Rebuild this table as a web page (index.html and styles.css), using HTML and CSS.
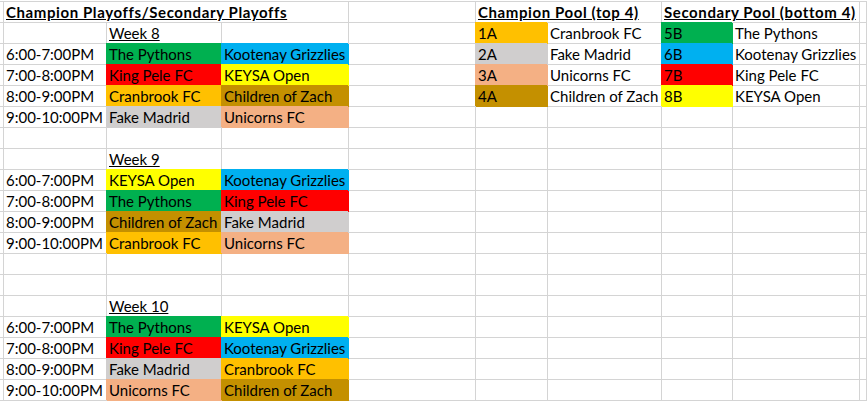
FILE: index.html
```html
<!DOCTYPE html>
<html>
<head>
<meta charset="utf-8">
<link rel="stylesheet" href="styles.css">
</head>
<body>
<div class="sheet">
  <!-- row 0 -->
  <div class="c top"></div><div class="c top s3 title">Champion Playoffs/Secondary Playoffs</div><div class="c top"></div><div class="c top s2 title">Champion Pool (top 4)</div><div class="c top s2 title">Secondary Pool (bottom 4)</div><div class="c top"></div>
  <!-- row 1 -->
  <div class="c"></div><div class="c"></div><div class="c u">Week 8</div><div class="c"></div><div class="c"></div><div class="c org">1A</div><div class="c">Cranbrook FC</div><div class="c grn">5B</div><div class="c">The Pythons</div><div class="c"></div>
  <!-- row 2 -->
  <div class="c"></div><div class="c">6:00-7:00PM</div><div class="c grn">The Pythons</div><div class="c blu">Kootenay Grizzlies</div><div class="c"></div><div class="c gry">2A</div><div class="c">Fake Madrid</div><div class="c blu">6B</div><div class="c">Kootenay Grizzlies</div><div class="c"></div>
  <!-- row 3 -->
  <div class="c"></div><div class="c">7:00-8:00PM</div><div class="c red">King Pele FC</div><div class="c yel">KEYSA Open</div><div class="c"></div><div class="c pch">3A</div><div class="c">Unicorns FC</div><div class="c red">7B</div><div class="c">King Pele FC</div><div class="c"></div>
  <!-- row 4 -->
  <div class="c"></div><div class="c">8:00-9:00PM</div><div class="c org">Cranbrook FC</div><div class="c brn">Children of Zach</div><div class="c"></div><div class="c brn">4A</div><div class="c">Children of Zach</div><div class="c yel">8B</div><div class="c">KEYSA Open</div><div class="c"></div>
  <!-- row 5 -->
  <div class="c"></div><div class="c">9:00-10:00PM</div><div class="c gry">Fake Madrid</div><div class="c pch">Unicorns FC</div><div class="c"></div><div class="c"></div><div class="c"></div><div class="c"></div><div class="c"></div><div class="c"></div>
  <!-- row 6 -->
  <div class="c"></div><div class="c"></div><div class="c"></div><div class="c"></div><div class="c"></div><div class="c"></div><div class="c"></div><div class="c"></div><div class="c"></div><div class="c"></div>
  <!-- row 7 -->
  <div class="c"></div><div class="c"></div><div class="c u">Week 9</div><div class="c"></div><div class="c"></div><div class="c"></div><div class="c"></div><div class="c"></div><div class="c"></div><div class="c"></div>
  <!-- row 8 -->
  <div class="c"></div><div class="c">6:00-7:00PM</div><div class="c yel">KEYSA Open</div><div class="c blu">Kootenay Grizzlies</div><div class="c"></div><div class="c"></div><div class="c"></div><div class="c"></div><div class="c"></div><div class="c"></div>
  <!-- row 9 -->
  <div class="c"></div><div class="c">7:00-8:00PM</div><div class="c grn">The Pythons</div><div class="c red">King Pele FC</div><div class="c"></div><div class="c"></div><div class="c"></div><div class="c"></div><div class="c"></div><div class="c"></div>
  <!-- row 10 -->
  <div class="c"></div><div class="c">8:00-9:00PM</div><div class="c brn">Children of Zach</div><div class="c gry">Fake Madrid</div><div class="c"></div><div class="c"></div><div class="c"></div><div class="c"></div><div class="c"></div><div class="c"></div>
  <!-- row 11 -->
  <div class="c"></div><div class="c">9:00-10:00PM</div><div class="c org">Cranbrook FC</div><div class="c pch">Unicorns FC</div><div class="c"></div><div class="c"></div><div class="c"></div><div class="c"></div><div class="c"></div><div class="c"></div>
  <!-- row 12 -->
  <div class="c"></div><div class="c"></div><div class="c"></div><div class="c"></div><div class="c"></div><div class="c"></div><div class="c"></div><div class="c"></div><div class="c"></div><div class="c"></div>
  <!-- row 13 -->
  <div class="c"></div><div class="c"></div><div class="c"></div><div class="c"></div><div class="c"></div><div class="c"></div><div class="c"></div><div class="c"></div><div class="c"></div><div class="c"></div>
  <!-- row 14 -->
  <div class="c"></div><div class="c"></div><div class="c u">Week 10</div><div class="c"></div><div class="c"></div><div class="c"></div><div class="c"></div><div class="c"></div><div class="c"></div><div class="c"></div>
  <!-- row 15 -->
  <div class="c"></div><div class="c">6:00-7:00PM</div><div class="c grn">The Pythons</div><div class="c yel">KEYSA Open</div><div class="c"></div><div class="c"></div><div class="c"></div><div class="c"></div><div class="c"></div><div class="c"></div>
  <!-- row 16 -->
  <div class="c"></div><div class="c">7:00-8:00PM</div><div class="c red">King Pele FC</div><div class="c blu">Kootenay Grizzlies</div><div class="c"></div><div class="c"></div><div class="c"></div><div class="c"></div><div class="c"></div><div class="c"></div>
  <!-- row 17 -->
  <div class="c"></div><div class="c">8:00-9:00PM</div><div class="c gry">Fake Madrid</div><div class="c org">Cranbrook FC</div><div class="c"></div><div class="c"></div><div class="c"></div><div class="c"></div><div class="c"></div><div class="c"></div>
  <!-- row 18 -->
  <div class="c"></div><div class="c">9:00-10:00PM</div><div class="c pch">Unicorns FC</div><div class="c brn">Children of Zach</div><div class="c"></div><div class="c"></div><div class="c"></div><div class="c"></div><div class="c"></div><div class="c"></div>
</div>
</body>
</html>
```

FILE: styles.css
```css
html, body {
  margin: 0;
  padding: 0;
  background: #ffffff;
}

body {
  font-family: Lato, "Liberation Sans", sans-serif;
  font-size: 15px;
  color: #000000;
}

.sheet {
  display: grid;
  grid-template-columns: 4px 103px 115px 127px 127px 72px 114px 71px 127px 1fr;
  grid-template-rows: 22px;
  grid-auto-rows: 21px;
  padding-top: 1px;
  width: 867px;
  height: 400px;
  overflow: hidden;
}

.c {
  box-sizing: border-box;
  border-right: 1px solid #d4d4d4;
  border-bottom: 1px solid #d4d4d4;
  line-height: 20px;
  padding-left: 2px;
  white-space: nowrap;
  overflow: visible;
}

.top {
  border-top: 1px solid #d4d4d4;
}

.s3 { grid-column: span 3; }
.s2 { grid-column: span 2; }

.title {
  font-weight: bold;
  text-decoration: underline;
  letter-spacing: 0.6px;
  padding-left: 2px;
}

.u { text-decoration: underline; }

.org, .gry, .pch, .brn, .grn, .blu, .red, .yel {
  box-shadow: -1px -1px 0 0 var(--fill);
  background: var(--fill);
  border-color: var(--fill);
}

.org { --fill: #ffc000; }
.gry { --fill: #d0cece; }
.pch { --fill: #f4b084; }
.brn { --fill: #c49000; }
.grn { --fill: #00b050; }
.blu { --fill: #00b0f0; }
.red { --fill: #ff0000; }
.yel { --fill: #ffff00; }
```
